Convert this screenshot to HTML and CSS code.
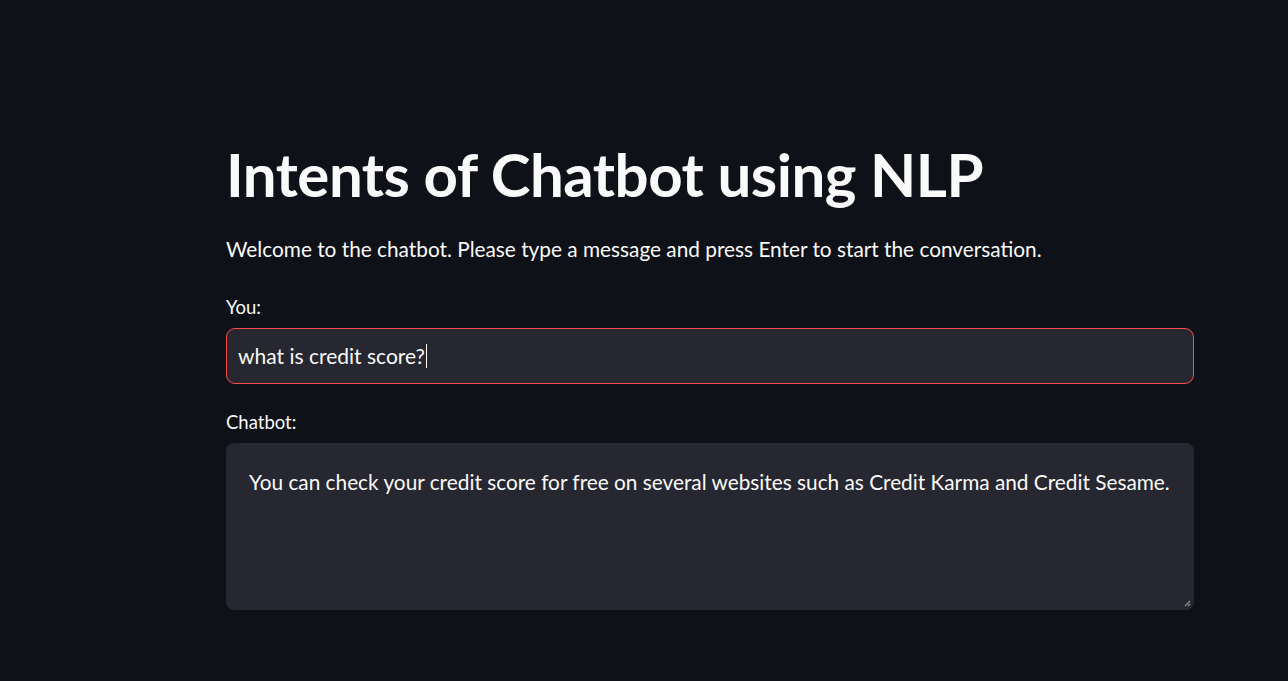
FILE: index.html
```html
<!DOCTYPE html>
<html lang="en">
<head>
<meta charset="utf-8">
<title>Intents of Chatbot using NLP</title>
<link rel="stylesheet" href="styles.css">
</head>
<body>
<main class="app">
  <section class="block">
    <h1 class="title">Intents of Chatbot using NLP</h1>
    <p class="intro">Welcome to the chatbot. Please type a message and press Enter to start the conversation.</p>
    <div class="field field-first">
      <label class="label" for="you">You:</label>
      <div class="input-wrap focused">
        <span class="input-text" id="you">what is credit score?</span><span class="caret"></span>
      </div>
    </div>
    <div class="field field-second">
      <label class="label" for="bot">Chatbot:</label>
      <div class="textarea" id="bot">
        <span class="area-text">You can check your credit score for free on several websites such as Credit Karma and Credit Sesame.</span>
        <svg class="grip" width="8" height="8" viewBox="0 0 8 8"><path d="M7 2 L2 7 M7 5 L5 7" stroke="#8b8d93" stroke-width="1.2" fill="none"/></svg>
      </div>
    </div>
  </section>
</main>
</body>
</html>
```

FILE: styles.css
```css
html, body {
  margin: 0;
  padding: 0;
  background: #0e1117;
  color: #fafafa;
  font-family: "Lato", "Source Sans Pro", sans-serif;
}
.app {
  display: flex;
  justify-content: flex-start;
  padding: 128px 0 0 226px;
}
.block {
  width: 968px;
  display: flex;
  flex-direction: column;
}
.title {
  margin: 0;
  font-size: 60px;
  font-weight: 700;
  line-height: 92px;
  letter-spacing: -0.5px;
}
.intro {
  margin: 14px 0 0 0;
  font-size: 20.8px;
  line-height: 30px;
}
.field {
  display: flex;
  flex-direction: column;
}
.field-first {
  margin-top: 31px;
}
.field-second {
  margin-top: 26px;
}
.label {
  font-size: 18.5px;
  line-height: 24px;
  margin-bottom: 9px;
}
.input-wrap {
  height: 56px;
  border: 1px solid #ff4b4b;
  border-radius: 9px;
  background: #262730;
  display: flex;
  align-items: center;
  padding: 0 11px;
  box-sizing: border-box;
}
.input-text {
  font-size: 21px;
  line-height: 26px;
}
.caret {
  width: 1px;
  height: 24px;
  background: #fafafa;
  margin-left: 1px;
}
.textarea {
  position: relative;
  height: 167px;
  border-radius: 8px;
  background: #262730;
  padding: 24px 22px 0 23px;
  box-sizing: border-box;
}
.area-text {
  font-size: 20.8px;
  line-height: 30px;
}
.grip {
  position: absolute;
  right: 3px;
  bottom: 3px;
}
```
